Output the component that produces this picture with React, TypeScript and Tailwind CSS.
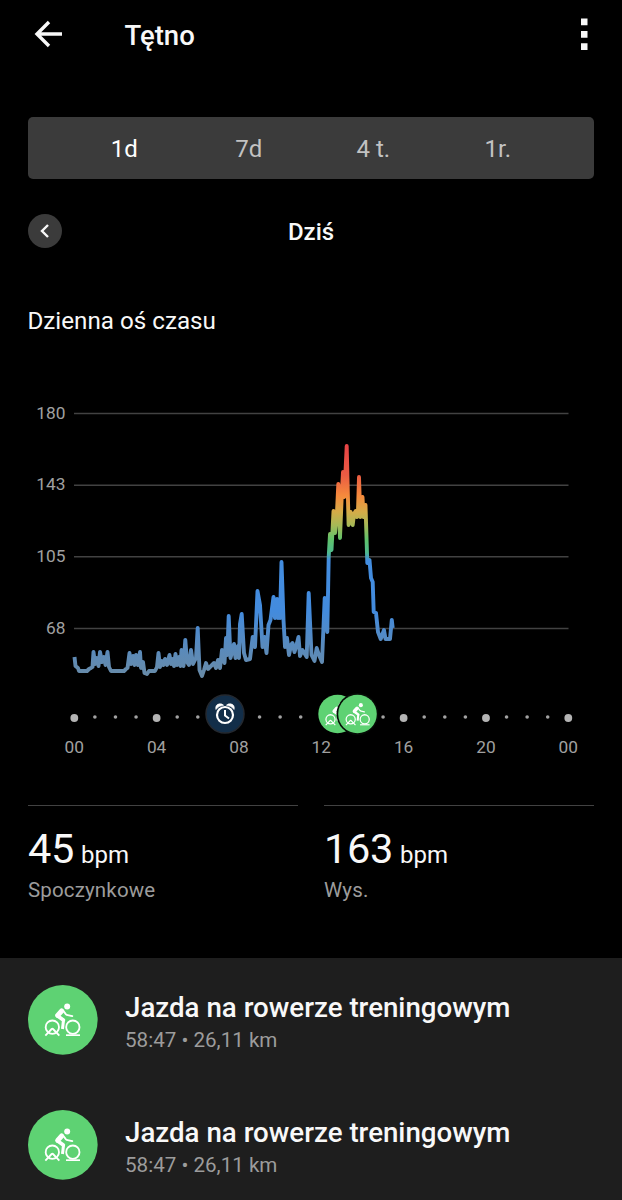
import React from "react";

const HEART_RATE =
  "74.5,657 75.5,666 78,668 79,671 87,671 89,669 91,668 92.5,667 93.5,652 95,664 97,658 98.5,666 100,652 102,662 104,657 105.5,665 107.5,652 109,667 111,671 124,671 126,669 127.5,668 129.5,653 131,664 133,656 134.5,665 136,655 138,665 140,652 141,668 143,662 144.5,673 147,674 149,671 155,671 157,667 158.5,653 160,667 162,661 163.5,665 165,659 167,665 169.5,655 171,664 173,659 174,666 175.5,654 177,665 179,657 180.5,666 181.5,650 183.5,666 185.3,640 187,662 189,665 191,650 193,664 196,658 197.7,628 199.5,670 202,676 204,670 206,663 208,669 211,666 214,663 216,668 218,660 220,668 222,650 224.5,663 226,638 227.3,655 228.7,616 230.5,658 234,644 235.5,658 238,646 239,658 240,624 241.7,614 244,653 246,660 250,659 252.7,637 255,647 257.5,591 260,605 262.5,647 264.5,637 266.5,653 268.5,625 270.5,620 273.5,597 275,618 277,599 278,618 279.5,600 280,618 281.5,562 283.5,620 285,647 287,638 289,655 291,645 292.5,643 294.5,652 296,647 298.5,637 300,656 302.5,650 306.7,657 308.7,593 311.5,655 314.5,661 316.7,648 319,655 322,662 324.7,598 327.3,632 328.7,557 330,534 331.5,550 333.5,511 335,533 337,512 338.3,484 340,538 342,490 343,472 344.3,497 346.7,446 348.6,525 350.7,512 352.7,525 354,514 355.7,511 357,517 358,511 359,477 360.3,517 362.5,497 363.5,517 365.5,505 367.3,563 369.5,560 371,578 372.7,582 373.7,612 376,613 378,632 380.7,639 384,630 385.5,639 390,639 391.8,620 392.7,628";

const Y_AXIS = [
  { label: "180", y: 413.5 },
  { label: "143", y: 485.2 },
  { label: "105", y: 556.8 },
  { label: "68", y: 628.5 },
];
const X_AXIS = ["00", "04", "08", "12", "16", "20", "00"];
const HOURS = Array.from({ length: 25 }, (_, i) => i);
const HIDDEN_HOURS = [7, 12, 13, 14];
const LEFT = 74.3;
const STEP = 494 / 24;

function Rider() {
  return (
    <g fill="none" stroke="#fff" strokeLinejoin="round">
      <circle cx="140.500" cy="95.500" r="9" fill="#fff" stroke="none" />
      <path d="M124 109L112 122" strokeWidth="15" strokeLinecap="round" />
      <path d="M112 124L129 136" strokeWidth="11" strokeLinecap="round" />
      <path d="M129.500 136L126.500 163" strokeWidth="9" />
      <path d="M127 106l10 13q2 2 5 2.500l14 3" strokeWidth="5.500" strokeLinecap="round" />
      <circle cx="96" cy="157.500" r="20" strokeWidth="5.500" />
      <circle cx="157.500" cy="157.500" r="20" strokeWidth="5.500" />
      <path d="M75 183L94 163Q96 161 98 163L117 183" strokeWidth="5.500" />
      <path d="M137 181.500H179" strokeWidth="5" />
    </g>
  );
}

function ActivityBadge() {
  return (
    <svg className="size-[70px] shrink-0" viewBox="23 31 210 210" aria-hidden="true">
      <circle cx="127.500" cy="135.500" r="104.500" fill="#5ed273" />
      <Rider />
    </svg>
  );
}

function Chart() {
  return (
    <svg className="block h-[388px] w-full font-['Roboto',sans-serif]" viewBox="0 382 622 388">
      <defs>
        <linearGradient id="zones" gradientUnits="userSpaceOnUse" x1="0" y1="445" x2="0" y2="676">
          <stop offset="0" stopColor="#e74446" />
          <stop offset=".13" stopColor="#eb5b43" />
          <stop offset=".22" stopColor="#f58a3c" />
          <stop offset=".29" stopColor="#d5ac48" />
          <stop offset=".35" stopColor="#a4b957" />
          <stop offset=".41" stopColor="#5fc26b" />
          <stop offset=".465" stopColor="#4fba8d" />
          <stop offset=".5" stopColor="#438de0" />
          <stop offset=".72" stopColor="#438bdd" />
          <stop offset=".86" stopColor="#578abf" />
          <stop offset="1" stopColor="#688ba8" />
        </linearGradient>
        <clipPath id="rear-badge">
          <circle cx="337.600" cy="714" r="19.300" />
        </clipPath>
      </defs>
      {Y_AXIS.map(({ label, y }) => (
        <g key={label}>
          <path d={`M74 ${y}H568.500`} stroke="#424242" strokeWidth="1.500" />
          <text x="65.500" y={y + 5} textAnchor="end" fontSize="17.300" fill="#a0a0a0">{label}</text>
        </g>
      ))}
      <polyline points={HEART_RATE} fill="none" stroke="url(#zones)" strokeWidth="3.900" strokeLinejoin="round" />
      {HOURS.filter((h) => !HIDDEN_HOURS.includes(h)).map((h) => (
        <circle key={h} cx={LEFT + h * STEP} cy={h % 4 ? 717 : 718} r={h % 4 ? 1.8 : 3.9} fill={h % 4 ? "#a2a2a2" : "#b4b4b4"} />
      ))}
      {X_AXIS.map((label, i) => (
        <text key={i} x={LEFT + i * 4 * STEP} y="753" textAnchor="middle" fontSize="17.300" fill="#a0a0a0">{label}</text>
      ))}
      <circle cx="225" cy="714" r="19" fill="#122e49" stroke="#242930" strokeWidth="1.500" />
      <circle cx="225" cy="715" r="8" fill="none" stroke="#fff" strokeWidth="2.200" />
      <path d="M225 710V715.500l4 3" fill="none" stroke="#fff" strokeWidth="2" />
      <path d="M215.800 709.500Q215 704.500 219.500 703.800Q222 703.500 223.600 705.200Q218.500 705.800 215.800 709.500ZM234.200 709.500Q235 704.500 230.500 703.800Q228 703.500 226.400 705.200Q231.500 705.800 234.200 709.500Z" fill="#fff" stroke="#fff" strokeWidth=".6" />
      <circle cx="337.600" cy="714" r="19.300" fill="#5ed273" />
      <g clipPath="url(#rear-badge)">
        <g transform="translate(308.600 683.400) scale(.228)">
          <Rider />
        </g>
      </g>
      <circle cx="357.500" cy="714" r="21" fill="#050b06" />
      <circle cx="357.500" cy="714" r="19.300" fill="#5ed273" />
      <g transform="translate(328.800 683.400) scale(.228)">
        <Rider />
      </g>
    </svg>
  );
}

function Stat({ value, label }: { value: string; label: string }) {
  return (
    <div className="h-[153px] border-t-[1.5px] border-[#424242] pt-[19px]">
      <p className="flex items-baseline leading-[48px]">
        <span className="text-[41.500px] tracking-[-.3px]">{value}</span>
        <span className="ml-[7px] text-[24px]">bpm</span>
      </p>
      <p className="-mt-[2px] text-[20.500px] leading-[26px] tracking-[.15px] text-[#9c9c9c]">{label}</p>
    </div>
  );
}

function Activity() {
  return (
    <li className="flex h-[124.500px] items-start gap-[27.500px] px-[27.500px] pt-[27px]">
      <ActivityBadge />
      <div className="pt-[7px]">
        <p className="text-[27.700px] font-medium leading-[32px] text-[#f8f8f8]">Jazda na rowerze treningowym</p>
        <p className="mt-[3px] text-[20.600px] leading-[26px] text-[#9c9c9c]">58:47 • 26,11 km</p>
      </div>
    </li>
  );
}

export default function App() {
  return (
    <main className="h-[1200px] w-[622px] overflow-hidden bg-black font-['Roboto',sans-serif] text-[#f8f8f8]">
      <header className="flex h-[69px] items-center px-[34px]">
        <svg className="-mt-[2px] h-[30px] w-[30px]" viewBox="0 0 30 30" fill="none" stroke="currentColor" strokeWidth="3.400">
          <path d="M15 3L3 15L15 27M3 15H28" />
        </svg>
        <h1 className="ml-[60.500px] flex-1 pt-[2px] text-[27.500px] font-medium">Tętno</h1>
        <svg className="-mt-[2px] h-[34px] w-[8px]" viewBox="0 0 8 34" fill="currentColor">
          <path d="M1 1.500h6.500v6.800h-6.500zM1 14h6.500v6.800h-6.500zM1 26.200h6.500v6.800h-6.500z" />
        </svg>
      </header>
      <nav className="mx-[28px] mt-[48px] grid h-[62px] grid-cols-4 items-center rounded-[5px] bg-[#3b3b3b] px-[34px] pt-[2px] text-center text-[24px] text-[#c2c2c2]">
        <span className="text-white">1d</span>
        <span>7d</span>
        <span>4 t.</span>
        <span>1r.</span>
      </nav>
      <div className="mx-[28px] mt-[35px] grid h-[34px] grid-cols-[34px_1fr_34px] items-center">
        <button className="-mt-[2px] flex size-[34px] items-center justify-center rounded-full bg-[#3b3b3b]">
          <svg className="mr-[1px] h-[14px] w-[9px]" viewBox="0 0 9 14" fill="none" stroke="currentColor" strokeWidth="2.400">
            <path d="M8 1L2 7L8 13" />
          </svg>
        </button>
        <h2 className="text-center text-[24px] font-medium">Dziś</h2>
      </div>
      <h3 className="mx-[27.500px] mt-[57px] h-[77px] text-[24.200px] leading-[32px]">Dzienna oś czasu</h3>
      <Chart />
      <section className="mx-[28px] mt-[35px] grid grid-cols-2 gap-[26px]">
        <Stat value="45" label="Spoczynkowe" />
        <Stat value="163" label="Wys." />
      </section>
      <ul className="h-[242px] bg-[#1e1e1e]">
        <Activity />
        <Activity />
      </ul>
    </main>
  );
}
